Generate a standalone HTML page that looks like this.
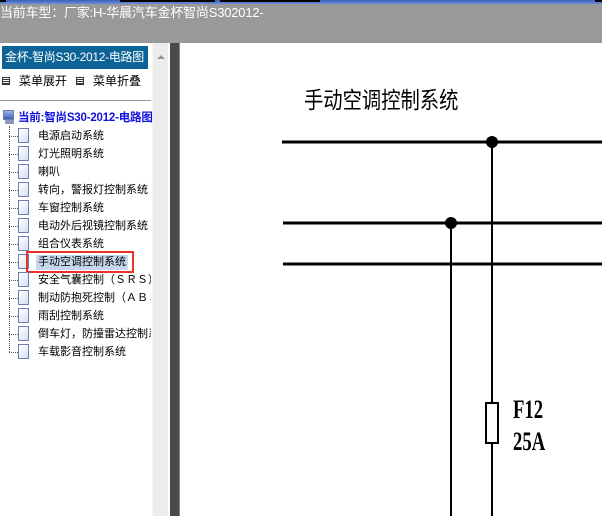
<!DOCTYPE html>
<html><head><meta charset="utf-8"><style>
*{margin:0;padding:0;box-sizing:border-box}
body{width:602px;height:516px;overflow:hidden;position:relative;background:#fff;font-family:"Liberation Sans","Noto Sans CJK SC",sans-serif}
.top{position:absolute;left:0;top:0;width:602px;height:43px;background:#999}
.topline{position:absolute;left:0;top:0;width:602px;height:4px;background:linear-gradient(#3a5fc0,#6f8fd8)}
.topline i{position:absolute;top:0;height:2px;background:#000}
.title{position:absolute;left:0;top:4px;color:#fff;font-size:13px;line-height:18px;white-space:nowrap;letter-spacing:-0.2px}
.left{position:absolute;left:0;top:43px;width:152px;height:473px;background:#fff}
.sb{position:absolute;left:152px;top:43px;width:16px;height:473px;background:#ececec;border-left:1px solid #f6f6f6}
.dark{position:absolute;left:170px;top:43px;width:9px;height:473px;background:#4a4a4a}
.gl{position:absolute;left:179px;top:43px;width:1px;height:473px;background:#888}
.hdr{position:absolute;left:2px;top:46px;width:146px;height:23px;background:#0b6495;color:#fff;font-size:12px;line-height:23px;padding-left:3px;white-space:nowrap;overflow:hidden;letter-spacing:-0.3px}
.menu{position:absolute;top:73px;font-size:12px;line-height:16px;color:#000;white-space:nowrap}
.menu b{display:inline-block;width:8px;height:8px;border:1px solid #333;margin-right:9px;background:repeating-linear-gradient(#fff 0 1px,#333 1px 2px)}
.sep{position:absolute;left:0;top:100px;width:151px;height:1px;background:#999}
.clip{position:absolute;left:0;top:120px;width:151px;height:250px;overflow:hidden}
.item{position:absolute;left:38px;font-size:11px;line-height:16px;white-space:nowrap;color:#000}
.doc{position:absolute;left:18px;width:11px;height:15px;border:1px solid #6b7fb0;background:linear-gradient(135deg,#fff,#d5e0f2)}
.dh{position:absolute;left:9px;width:9px;border-top:1px dotted #555}
</style></head><body>
<div class="top"></div>
<div class="topline"><i style="left:0;width:6px"></i><i style="left:120px;width:95px"></i><i style="left:220px;width:100px"></i><i style="left:595px;width:7px"></i></div>
<div class="title">当前车型：厂家:H-华晨汽车金杯智尚S302012-</div>
<div class="left"></div>
<div class="sb"><div style="position:absolute;left:4px;top:12px;width:0;height:0;border-left:4px solid transparent;border-right:4px solid transparent;border-bottom:4px solid #999"></div></div>
<div class="dark"></div><div class="gl"></div>
<div class="hdr">金杯-智尚S30-2012-电路图</div>
<div class="menu" style="left:2px"><b></b>菜单展开</div>
<div class="menu" style="left:76px"><b></b>菜单折叠</div>
<div class="sep"></div>
<div style="position:absolute;left:3px;top:110px;width:11px;height:10px;background:linear-gradient(#9ab4e8,#3a5fb8);border:1px solid #6c7fa8"></div>
<div style="position:absolute;left:5px;top:120px;width:9px;height:4px;background:#8a9ab8"></div>
<div style="position:absolute;left:18px;top:110px;font-size:11.5px;font-weight:bold;color:#1010e0;line-height:16px;white-space:nowrap;letter-spacing:-0.2px">当前:智尚S30-2012-电路图</div>
<div class="clip"><div style="position:absolute;left:0;top:-120px;width:151px;height:500px">
<div style="position:absolute;left:9px;top:126px;height:226px;border-left:1px dotted #555"></div>
<div class="dh" style="top:136px"></div><div class="doc" style="top:128px"></div><div class="item" style="top:128px">电源启动系统</div>
<div class="dh" style="top:154px"></div><div class="doc" style="top:146px"></div><div class="item" style="top:146px">灯光照明系统</div>
<div class="dh" style="top:172px"></div><div class="doc" style="top:164px"></div><div class="item" style="top:164px">喇叭</div>
<div class="dh" style="top:190px"></div><div class="doc" style="top:182px"></div><div class="item" style="top:182px">转向，警报灯控制系统</div>
<div class="dh" style="top:208px"></div><div class="doc" style="top:200px"></div><div class="item" style="top:200px">车窗控制系统</div>
<div class="dh" style="top:226px"></div><div class="doc" style="top:218px"></div><div class="item" style="top:218px">电动外后视镜控制系统</div>
<div class="dh" style="top:244px"></div><div class="doc" style="top:236px"></div><div class="item" style="top:236px">组合仪表系统</div>
<div class="dh" style="top:262px"></div><div class="doc" style="top:254px"></div>
<div style="position:absolute;left:36px;top:255px;width:92px;height:15px;background:#c8d8ec"></div>
<div class="item" style="top:254px">手动空调控制系统</div>
<div style="position:absolute;left:26px;top:251px;width:108px;height:22px;border:2px solid #e8302c"></div>
<div class="dh" style="top:280px"></div><div class="doc" style="top:272px"></div><div class="item" style="top:272px">安全气囊控制（ＳＲＳ）.</div>
<div class="dh" style="top:298px"></div><div class="doc" style="top:290px"></div><div class="item" style="top:290px">制动防抱死控制（ＡＢＳ</div>
<div class="dh" style="top:316px"></div><div class="doc" style="top:308px"></div><div class="item" style="top:308px">雨刮控制系统</div>
<div class="dh" style="top:334px"></div><div class="doc" style="top:326px"></div><div class="item" style="top:326px">倒车灯，防撞雷达控制系统</div>
<div class="dh" style="top:352px"></div><div class="doc" style="top:344px"></div><div class="item" style="top:344px">车载影音控制系统</div>
</div></div>
<svg style="position:absolute;left:0;top:0" width="602" height="516">
<text x="0" y="108" font-family="'Noto Sans CJK SC',sans-serif" font-size="23" transform="translate(304,0) scale(0.84,1)" fill="#000">手动空调控制系统</text>
<g stroke="#000" stroke-width="3"><line x1="282" y1="142" x2="602" y2="142"/><line x1="283" y1="223" x2="602" y2="223"/><line x1="283" y1="264" x2="602" y2="264"/></g>
<g stroke="#000" stroke-width="2"><line x1="492" y1="142" x2="492" y2="403"/><line x1="492" y1="443" x2="492" y2="516"/><line x1="451" y1="223" x2="451" y2="516"/></g>
<rect x="486" y="403" width="12" height="40" fill="#fff" stroke="#000" stroke-width="2"/>
<circle cx="492" cy="142" r="6"/><circle cx="451" cy="223" r="6"/>
<text x="0" y="418" font-family="'Liberation Serif',serif" font-size="26" font-weight="bold" transform="translate(513,0) scale(0.72,1)" fill="#000">F12</text>
<text x="0" y="450" font-family="'Liberation Serif',serif" font-size="26" font-weight="bold" transform="translate(513,0) scale(0.72,1)" fill="#000">25A</text>
</svg>
</body></html>
